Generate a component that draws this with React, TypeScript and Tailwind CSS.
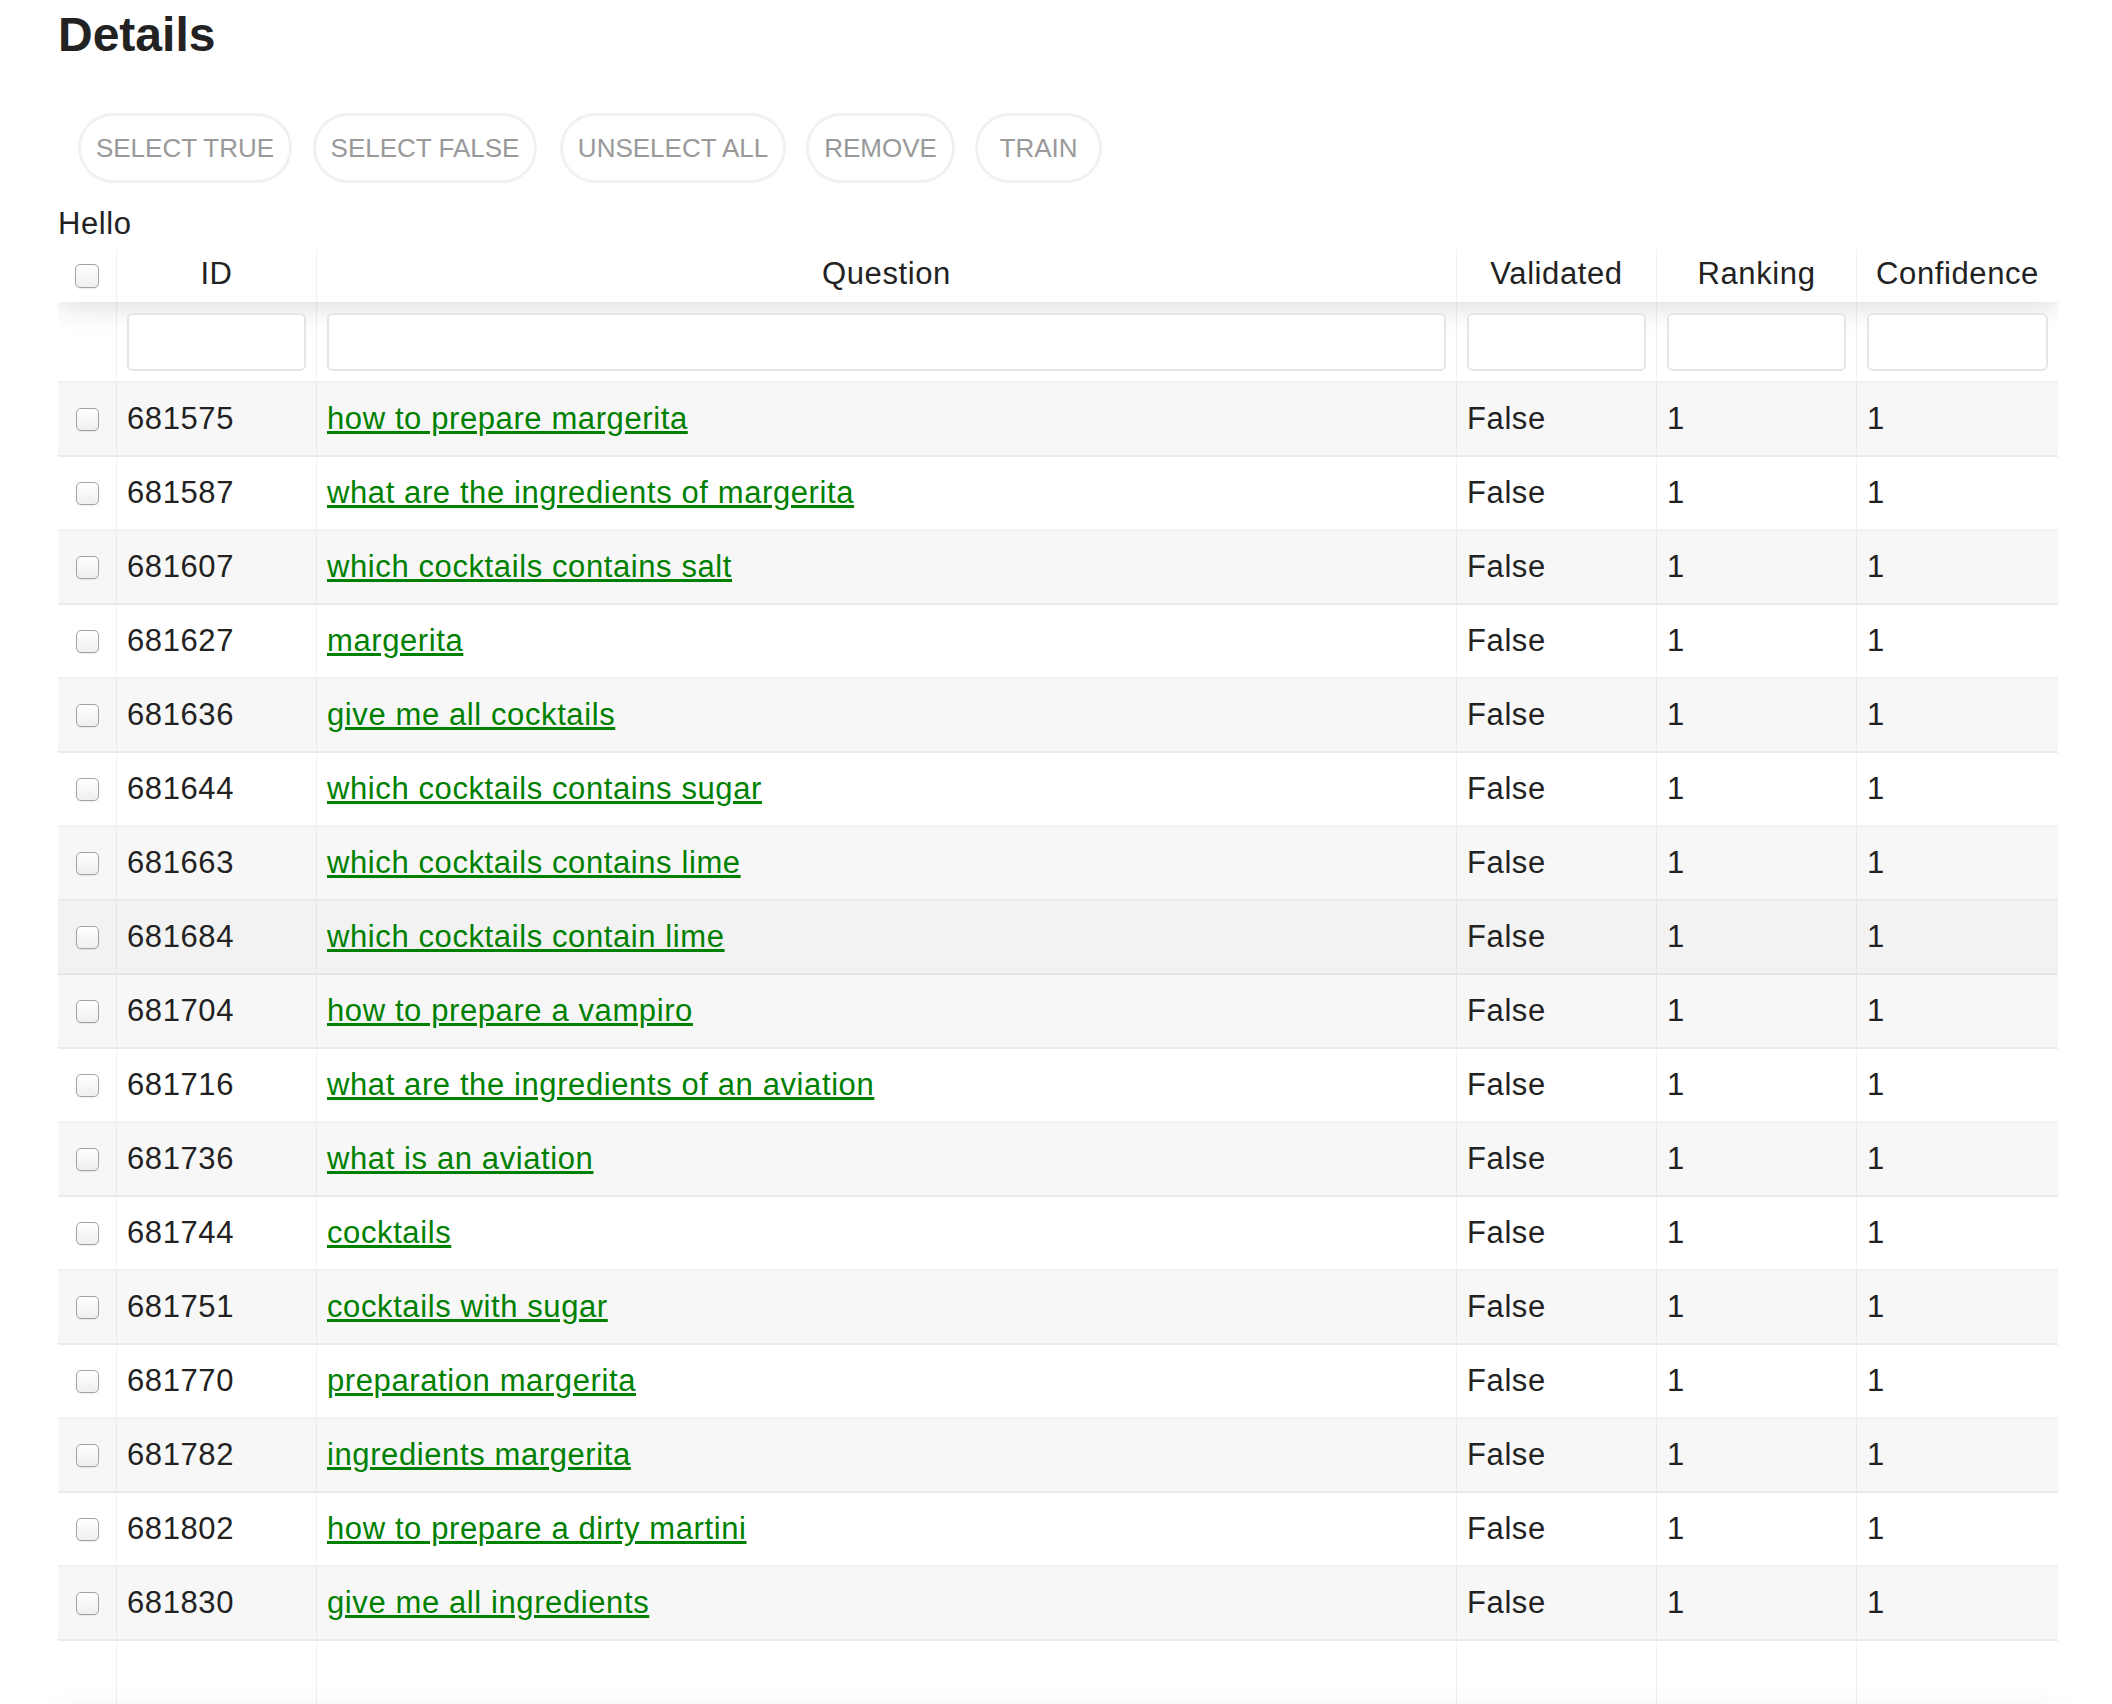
import React from 'react';

interface Row {
  id: number;
  question: string;
  validated: string;
  ranking: number;
  confidence: number;
}

const rows: Row[] = [
  { id: 681575, question: 'how to prepare margerita', validated: 'False', ranking: 1, confidence: 1 },
  { id: 681587, question: 'what are the ingredients of margerita', validated: 'False', ranking: 1, confidence: 1 },
  { id: 681607, question: 'which cocktails contains salt', validated: 'False', ranking: 1, confidence: 1 },
  { id: 681627, question: 'margerita', validated: 'False', ranking: 1, confidence: 1 },
  { id: 681636, question: 'give me all cocktails', validated: 'False', ranking: 1, confidence: 1 },
  { id: 681644, question: 'which cocktails contains sugar', validated: 'False', ranking: 1, confidence: 1 },
  { id: 681663, question: 'which cocktails contains lime', validated: 'False', ranking: 1, confidence: 1 },
  { id: 681684, question: 'which cocktails contain lime', validated: 'False', ranking: 1, confidence: 1 },
  { id: 681704, question: 'how to prepare a vampiro', validated: 'False', ranking: 1, confidence: 1 },
  { id: 681716, question: 'what are the ingredients of an aviation', validated: 'False', ranking: 1, confidence: 1 },
  { id: 681736, question: 'what is an aviation', validated: 'False', ranking: 1, confidence: 1 },
  { id: 681744, question: 'cocktails', validated: 'False', ranking: 1, confidence: 1 },
  { id: 681751, question: 'cocktails with sugar', validated: 'False', ranking: 1, confidence: 1 },
  { id: 681770, question: 'preparation margerita', validated: 'False', ranking: 1, confidence: 1 },
  { id: 681782, question: 'ingredients margerita', validated: 'False', ranking: 1, confidence: 1 },
  { id: 681802, question: 'how to prepare a dirty martini', validated: 'False', ranking: 1, confidence: 1 },
  { id: 681830, question: 'give me all ingredients', validated: 'False', ranking: 1, confidence: 1 },
];

// index of the row under the mouse in the screenshot
const HOVERED = 7;

const COLS = 'grid grid-cols-[59px_200px_1140px_200px_200px_201px]';
const DIVIDER = 'border-r border-black/5';

const actions = [
  { label: 'SELECT TRUE', className: 'ml-[20px] w-[214px]' },
  { label: 'SELECT FALSE', className: 'ml-[21px] w-[224px]' },
  { label: 'UNSELECT ALL', className: 'ml-[23px] w-[226px]' },
  { label: 'REMOVE', className: 'ml-[20px] w-[149px]' },
  { label: 'TRAIN', className: 'ml-[20px] w-[127px]' },
];

function Checkbox({ size = 'w-[23px] h-[23px]' }: { size?: string }) {
  return (
    <span
      className={`${size} block rounded-[5px] border border-[#a3a3a3] bg-gradient-to-b from-white to-[#efefef] shadow-[0_1px_1px_rgba(0,0,0,0.08)]`}
    />
  );
}

export default function App() {
  return (
    <div className="min-h-screen bg-white px-[58px] pt-[7px] font-['Liberation_Sans',Arial,sans-serif] text-[#222]">
      <h1 className="text-[48px] leading-[56px] font-bold">Details</h1>

      <div className="flex mt-[50px]">
        {actions.map((a) => (
          <button
            key={a.label}
            className={`${a.className} h-[70px] flex items-center justify-center rounded-full border-[3px] border-[#f1f1f1] bg-white text-[26px] text-[#999]`}
          >
            {a.label}
          </button>
        ))}
      </div>

      <div className="mt-[23px] text-[31px] leading-[36px] tracking-[0.6px]">Hello</div>

      <div className="mt-[7px] w-[2000px] tracking-[0.6px]">
        <div className="overflow-hidden">
          {/* header */}
          <div className={`${COLS} h-[53px] shadow-[0_4px_30px_0_rgba(0,0,0,0.15)]`}>
            <div className={`${DIVIDER} flex items-center justify-center`}>
              <Checkbox size="w-[24px] h-[24px]" />
            </div>
            {['ID', 'Question', 'Validated', 'Ranking'].map((h) => (
              <div key={h} className={`${DIVIDER} pt-[9px] text-center text-[31px] leading-[31px]`}>
                {h}
              </div>
            ))}
            <div className="pt-[9px] text-center text-[31px] leading-[31px]">Confidence</div>
          </div>

          {/* filters */}
          <div className={`${COLS} border-b-2 border-black/5`}>
            <div className={DIVIDER} />
            {[0, 1, 2, 3, 4].map((i) => (
              <div key={i} className={`${i < 4 ? DIVIDER : ''} px-[10px] pt-[11px] pb-[10px]`}>
                <input className="block w-full h-[58px] rounded-[6px] border-2 border-[#e5e5e5] bg-white outline-none" />
              </div>
            ))}
          </div>

          {/* body */}
          {rows.map((r, i) => (
            <div
              key={r.id}
              className={`${COLS} h-[74px] border-b-2 border-black/5 text-[31px] ${
                i === HOVERED ? 'bg-[#f2f2f2]' : i % 2 === 0 ? 'bg-[#f7f7f7]' : 'bg-white'
              }`}
            >
              <div className={`${DIVIDER} flex items-center justify-center`}>
                <Checkbox />
              </div>
              <div className={`${DIVIDER} flex items-center px-[10px]`}>{r.id}</div>
              <div className={`${DIVIDER} flex items-center px-[10px]`}>
                <a href="#" className="text-[#008000] underline">
                  {r.question}
                </a>
              </div>
              <div className={`${DIVIDER} flex items-center px-[10px]`}>{r.validated}</div>
              <div className={`${DIVIDER} flex items-center px-[10px]`}>{r.ranking}</div>
              <div className="flex items-center px-[10px]">{r.confidence}</div>
            </div>
          ))}

          {/* padding row */}
          <div className={`${COLS} h-[74px]`}>
            <div className={DIVIDER} />
            <div className={DIVIDER} />
            <div className={DIVIDER} />
            <div className={DIVIDER} />
            <div className={DIVIDER} />
            <div />
          </div>
        </div>

        {/* pagination */}
        <div className="h-[90px] border-t-2 border-black/10 bg-white shadow-[0_0_30px_0_rgba(0,0,0,0.1)]" />
      </div>
    </div>
  );
}
